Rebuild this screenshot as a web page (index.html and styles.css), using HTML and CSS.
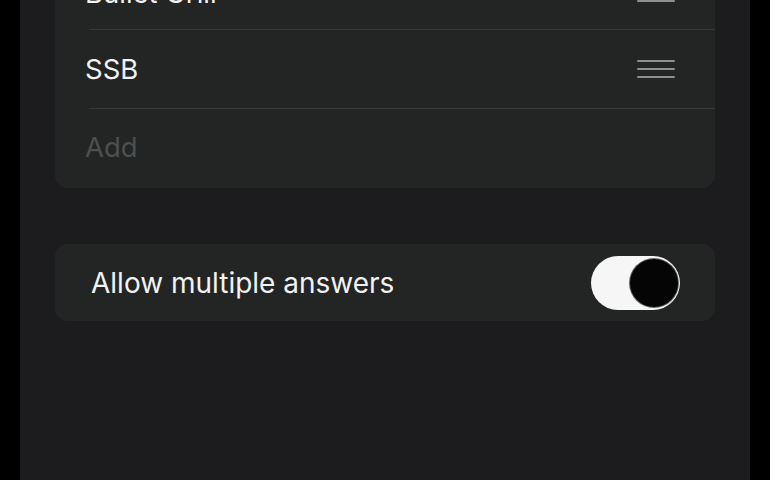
FILE: index.html
```html
<!DOCTYPE html>
<html>
<head>
<meta charset="utf-8">
<link rel="stylesheet" href="styles.css">
</head>
<body>
<div class="panel">
  <div class="card list">
    <div class="row first">
      <span class="label">Bullet Grill</span>
      <span class="handle"><i></i><i></i><i></i></span>
    </div>
    <div class="row">
      <span class="label">SSB</span>
      <span class="handle"><i></i><i></i><i></i></span>
    </div>
    <div class="row">
      <span class="label placeholder">Add</span>
    </div>
  </div>
  <div class="card setting">
    <span class="setting-label">Allow multiple answers</span>
    <span class="switch"><span class="knob"></span></span>
  </div>
</div>
</body>
</html>
```

FILE: styles.css
```css
html, body {
  margin: 0;
  padding: 0;
  background: #000;
  height: 480px;
  overflow: hidden;
}
body {
  font-family: Inter, "Liberation Sans", sans-serif;
  color: #f2f2f2;
}
.panel {
  margin: 0 20px;
  height: 480px;
  background: #1c1c1f;
  padding: 0 35px;
  display: flex;
  flex-direction: column;
  gap: 56px;
}
.card {
  background: #232525;
  border-radius: 13px;
}
.list {
  margin-top: -49px;
  display: flex;
  flex-direction: column;
}
.row {
  box-sizing: border-box;
  height: 79px;
  margin-left: 34px;
  padding-right: 40px;
  border-top: 1px solid #37393a;
  display: flex;
  align-items: center;
  justify-content: space-between;
}
.row.first {
  height: 78px;
  border-top: none;
  padding-top: 5px;
}
.row:last-child {
  height: 80px;
  padding-bottom: 4px;
}
.label {
  margin-left: -4px;
  font-size: 27.5px;
  letter-spacing: 0;
}
.placeholder {
  color: #4d4f4f;
}
.handle {
  width: 38px;
  display: flex;
  flex-direction: column;
  gap: 6px;
}
.handle i {
  display: block;
  height: 2px;
  border-radius: 1px;
  background: #8e9091;
}
.setting {
  height: 77px;
  padding: 0 35px 0 36px;
  display: flex;
  align-items: center;
  justify-content: space-between;
}
.setting-label {
  font-size: 28px;
}
.switch {
  width: 89px;
  height: 54px;
  border-radius: 27px;
  background: #f6f6f6;
  display: flex;
  align-items: center;
  justify-content: flex-end;
  padding-right: 2px;
  box-sizing: border-box;
}
.knob {
  width: 48px;
  height: 48px;
  border-radius: 50%;
  background: #050505;
  box-shadow: 0 0 0 1px #666;
}
```
